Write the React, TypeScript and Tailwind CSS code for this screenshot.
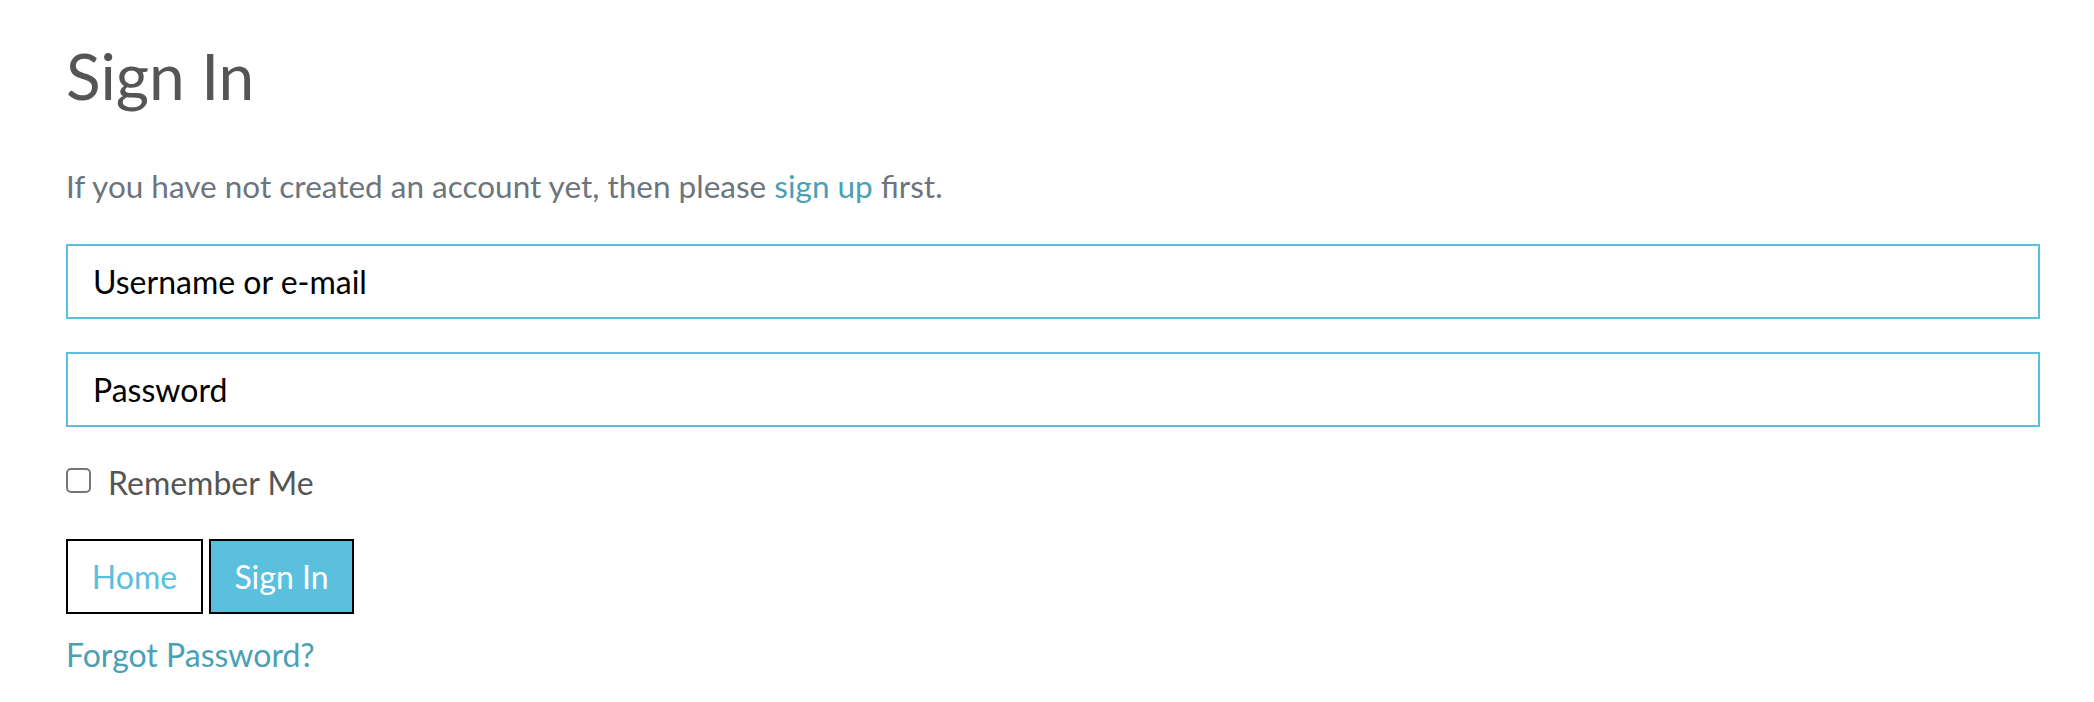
import React from 'react';

const App = () => {
  return (
    <div className="min-h-screen bg-white pl-[66px] pr-[54px] font-['Lato','Open_Sans',sans-serif]">
      <h1 className="pt-[44px] text-[64px] leading-[64px] font-normal text-[#555555]">Sign In</h1>

      <p className="mt-[62px] text-[31.5px] leading-[32px] text-[#6c757d]">
        If you have not created an account yet, then please{' '}
        <a href="#" className="text-[#4aa0b5]">sign up</a> first.
      </p>

      <form className="mt-[42px]" onSubmit={(e) => e.preventDefault()}>
        <input
          type="text"
          placeholder="Username or e-mail"
          className="block w-full h-[75px] border-2 border-[#5bc0de] px-[25px] text-[32px] text-black placeholder:text-black outline-none font-['Lato',sans-serif]"
        />
        <input
          type="password"
          placeholder="Password"
          className="mt-[33px] block w-full h-[75px] border-2 border-[#5bc0de] px-[25px] text-[32px] text-black placeholder:text-black outline-none font-['Lato',sans-serif]"
        />

        <label className="mt-[40px] flex items-start gap-[17px]">
          <span className="mt-[1px] w-[25px] h-[25px] rounded-[5px] border-2 border-[#767676] bg-white"></span>
          <span className="text-[32px] leading-[32px] text-[#555555]">Remember Me</span>
        </label>

        <div className="mt-[40px] flex gap-[6px]">
          <button
            type="button"
            className="h-[75px] w-[137px] border-2 border-black bg-white text-[32px] text-[#5bc0de] font-['Lato',sans-serif]"
          >
            Home
          </button>
          <button
            type="submit"
            className="h-[75px] w-[145px] border-2 border-black bg-[#5bc0de] text-[32px] text-white font-['Lato',sans-serif]"
          >
            Sign In
          </button>
        </div>
      </form>

      <a href="#" className="mt-[25px] block text-[32px] leading-[32px] text-[#4aa0b5]">
        Forgot Password?
      </a>
    </div>
  );
};

export default App;
